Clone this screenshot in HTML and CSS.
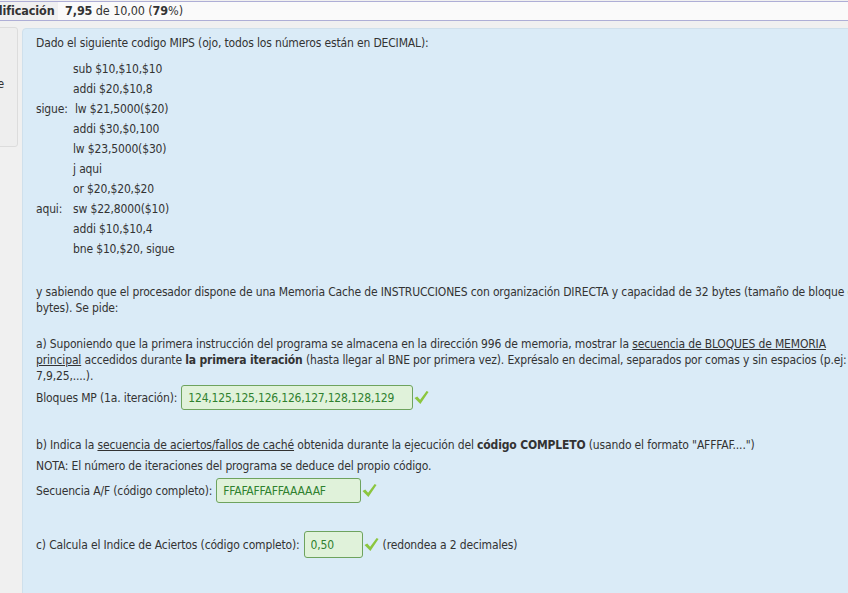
FILE: index.html
```html
<!DOCTYPE html>
<html lang="es">
<head>
    <meta charset="UTF-8">
    <title>Revisión del intento</title>
    <link rel="stylesheet" href="styles.css">
</head>
<body>
    <div class="grade-bar">
        <div class="grade-label">Calificación</div>
        <div class="grade-value"><b>7,95</b> de 10,00 (<b>79</b>%)</div>
    </div>

    <div class="question">
        <div class="info">
            <div class="qno">Pregunta 3</div>
            <div>Correcta</div>
            <div class="wide">Se puntúa 2,95 sobre</div>
            <div>3,00</div>
            <div>Marcar</div>
        </div>

        <div class="formulation">
            <p class="title">Dado el siguiente codigo MIPS (ojo, todos los números están en DECIMAL):</p>

            <div class="code">
                <span></span><span>sub $10,$10,$10</span>
                <span></span><span>addi $20,$10,8</span>
                <span>sigue:</span><span class="shift">lw $21,5000($20)</span>
                <span></span><span>addi $30,$0,100</span>
                <span></span><span>lw $23,5000($30)</span>
                <span></span><span>j aqui</span>
                <span></span><span>or $20,$20,$20</span>
                <span>aqui:</span><span>sw $22,8000($10)</span>
                <span></span><span>addi $10,$10,4</span>
                <span></span><span>bne $10,$20, sigue</span>
            </div>

            <p class="para intro">y sabiendo que el procesador dispone de una Memoria Cache de INSTRUCCIONES con organización DIRECTA y capacidad de 32 bytes (tamaño de bloque de 8 bytes). Se pide:</p>

            <p class="para part-a">a) Suponiendo que la primera instrucción del programa se almacena en la dirección 996 de memoria, mostrar la <u>secuencia de BLOQUES de MEMORIA principal</u> accedidos durante <b>la primera iteración</b> (hasta llegar al BNE por primera vez). Exprésalo en decimal, separados por comas y sin espacios (p.ej: 7,9,25,....).</p>

            <div class="answer row-a">
                <label>Bloques MP (1a. iteración):</label>
                <input class="correct w-a" type="text" value="124,125,125,126,126,127,128,128,129" readonly>
                <svg class="tick" viewBox="0 0 16 16"><path d="M0.5 8.5 L3.5 7 L6.5 10.5 L13.5 1 L15.5 2.2 L6.8 14.8 Z"/></svg>
            </div>

            <p class="para part-b">b) Indica la <u>secuencia de aciertos/fallos de caché</u> obtenida durante la ejecución del <b>código COMPLETO</b> (usando el formato "AFFFAF....")</p>
            <p class="para nota">NOTA: El número de iteraciones del programa se deduce del propio código.</p>

            <div class="answer row-b">
                <label>Secuencia A/F (código completo):</label>
                <input class="correct w-b" type="text" value="FFAFAFFAFFAAAAAF" readonly>
                <svg class="tick" viewBox="0 0 16 16"><path d="M0.5 8.5 L3.5 7 L6.5 10.5 L13.5 1 L15.5 2.2 L6.8 14.8 Z"/></svg>
            </div>

            <div class="answer row-c">
                <label>c) Calcula el Indice de Aciertos (código completo):</label>
                <input class="correct w-c" type="text" value="0,50" readonly>
                <svg class="tick" viewBox="0 0 16 16"><path d="M0.5 8.5 L3.5 7 L6.5 10.5 L13.5 1 L15.5 2.2 L6.8 14.8 Z"/></svg>
                <span class="hint">(redondea a 2 decimales)</span>
            </div>
        </div>
    </div>
</body>
</html>
```

FILE: styles.css
```css
body {
    margin: 0;
    background-color: #f0f0f0;
    font-family: "DejaVu Sans Condensed", "DejaVu Sans", sans-serif;
    font-size: 12px;
    letter-spacing: -0.15px;
    color: #333;
    overflow: hidden;
    height: 593px;
}
.grade-bar {
    display: flex;
    margin-top: 1px;
    height: 18px;
    line-height: 18px;
    border-top: 1px solid #aeaed6;
    border-bottom: 1px solid #aeaed6;
    background-color: #fafafa;
    font-size: 12.5px;
    letter-spacing: -0.1px;
}
.grade-label {
    margin-left: -21px;
    width: 75px;
    padding-left: 4px;
    font-weight: bold;
    background-color: #f0f0f0;
}
.grade-value {
    padding-left: 7px;
}
.question {
    display: flex;
    align-items: flex-start;
    margin-top: 6px;
}
.info {
    flex: none;
    width: 120px;
    margin-left: -116px;
    height: 110px;
    padding: 4px 6px;
    border: 1px solid #dcdcdc;
    border-radius: 3px;
    background-color: #eeeeee;
    line-height: 16px;
    white-space: nowrap;
}
.info .qno {
    font-weight: bold;
    margin-top: 6px;
}
.info .wide {
    margin-top: 6px;
}
.formulation {
    flex: none;
    width: 835px;
    height: 600px;
    margin-top: 1px;
    margin-left: 4px;
    padding: 4px 13px;
    border: 1px solid #cfe0ec;
    border-radius: 4px;
    background-color: #daebf7;
}
p {
    margin: 0;
}
.title {
    line-height: 20px;
}
.code {
    display: grid;
    grid-template-columns: 37px auto;
    grid-auto-rows: 20px;
    line-height: 20px;
    margin-top: 6px;
}
.code .shift {
    padding-left: 2px;
}
.para {
    line-height: 16px;
}
.intro {
    margin-top: 25px;
}
.part-a {
    margin-top: 20px;
}
.part-b {
    margin-top: 27px;
}
.nota {
    margin-top: 5px;
}
.answer {
    display: flex;
    align-items: center;
    height: 25px;
}
.answer label {
    margin-right: 4px;
}
.row-a {
    margin-top: 1px;
}
.row-b {
    margin-top: 4px;
}
.row-c {
    margin-top: 28px;
    height: 27px;
}
input.correct {
    box-sizing: border-box;
    height: 100%;
    padding: 0 6px;
    border: 1px solid #6ea35e;
    border-radius: 3px;
    background-color: #e0f2da;
    color: #2f812f;
    font-family: "DejaVu Sans Condensed", "DejaVu Sans", sans-serif;
    font-size: 12px;
    letter-spacing: -0.2px;
    outline: none;
}
.w-a {
    width: 232px;
}
.w-b {
    width: 145px;
}
.w-c {
    width: 59px;
}
.tick {
    width: 15px;
    height: 15px;
    margin-left: 1px;
    fill: #8cc63f;
}
.hint {
    margin-left: 4px;
}
```
